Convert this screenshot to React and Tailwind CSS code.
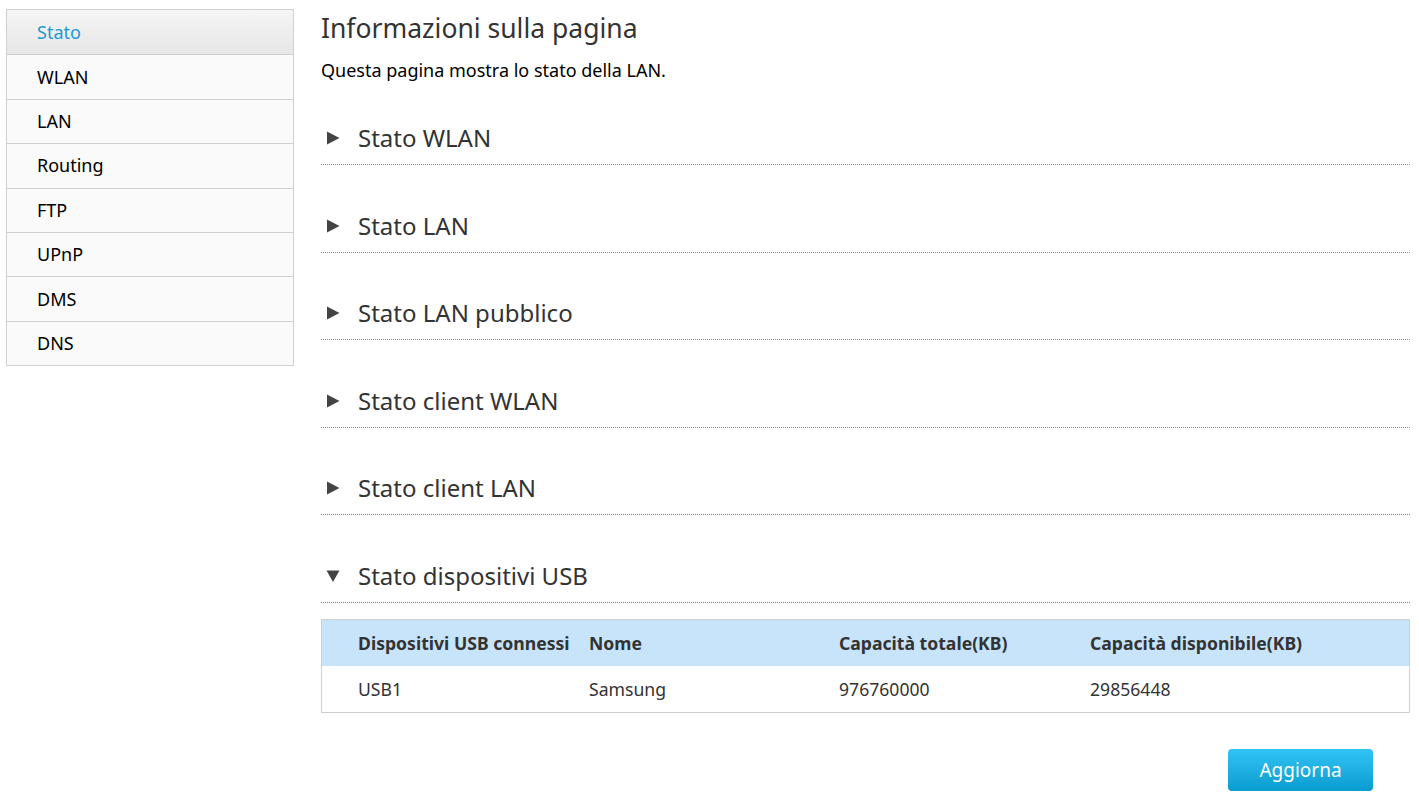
import React from "react";

const items = ["Stato", "WLAN", "LAN", "Routing", "FTP", "UPnP", "DMS", "DNS"];
const sections = [
  "Stato WLAN",
  "Stato LAN",
  "Stato LAN pubblico",
  "Stato client WLAN",
  "Stato client LAN",
];

function Right() {
  return (
    <svg width="14" height="14" viewBox="0 0 14 14" className="shrink-0">
      <path d="M1 0.5 L13.5 7 L1 13.5 Z" fill="#444" />
    </svg>
  );
}
function Down() {
  return (
    <svg width="14" height="14" viewBox="0 0 14 14" className="shrink-0">
      <path d="M0.5 1.5 L13.5 1.5 L7 13 Z" fill="#444" />
    </svg>
  );
}

function Section({ title, open, first }) {
  return (
    <div
      className={
        "flex flex-col justify-end border-b border-dotted border-[#888] " +
        (first ? "h-[83px]" : "h-[87.6px]")
      }
    >
      <div className="flex items-center gap-[18px] pl-[5px] pb-[10px] text-[24px] leading-[32px] text-[#333]">
        {open ? <Down /> : <Right />}
        <span>{title}</span>
      </div>
    </div>
  );
}

export default function App() {
  return (
    <div
      className="flex bg-white text-[#222] min-h-[794px]"
      style={{ fontFamily: '"Noto Sans", "Open Sans", sans-serif' }}
    >
      <div className="pl-[6px] pt-[9px] w-[321px] shrink-0">
        <div className="w-[288px] border border-[#d0d0d0]">
          {items.map((it, i) => (
            <div
              key={it}
              className={
                "h-[44.4px] flex items-center pl-[30px] text-[18px] " +
                (i > 0 ? "border-t border-[#d0d0d0] " : "") +
                (i === 0
                  ? "bg-gradient-to-b from-[#f6f6f6] to-[#e6e6e6] text-[#1a9ad6]"
                  : "bg-[#fafafa] text-black")
              }
            >
              {it}
            </div>
          ))}
        </div>
      </div>
      <div className="flex-1 pr-[9px]">
        <div className="pt-[10px] text-[26.5px] leading-[36px] text-[#333]">
          Informazioni sulla pagina
        </div>
        <div className="mt-[12px] text-[18px] leading-[24px] text-black">
          Questa pagina mostra lo stato della LAN.
        </div>
        <div>
          {sections.map((s, i) => (
            <Section key={s} title={s} first={i === 0} />
          ))}
          <Section title="Stato dispositivi USB" open />
        </div>
        <div className="mt-[16px] border border-[#d0d0d0] text-[17.6px]">
          <div className="grid grid-cols-[267px_250px_251px_1fr] h-[46px] items-center bg-[#c7e4fb] font-bold text-[#333]">
            <div className="pl-[36px] whitespace-nowrap">Dispositivi USB connessi</div>
            <div>Nome</div>
            <div>Capacità totale(KB)</div>
            <div>Capacità disponibile(KB)</div>
          </div>
          <div className="grid grid-cols-[267px_250px_251px_1fr] h-[46px] items-center bg-white text-[#333]">
            <div className="pl-[36px]">USB1</div>
            <div>Samsung</div>
            <div>976760000</div>
            <div>29856448</div>
          </div>
        </div>
        <div className="flex justify-end mt-[36px] pr-[37px]">
          <button className="w-[145px] h-[42px] rounded-[4px] bg-gradient-to-b from-[#30c4f5] to-[#079ccf] text-white text-[19px]">
            Aggiorna
          </button>
        </div>
      </div>
    </div>
  );
}
